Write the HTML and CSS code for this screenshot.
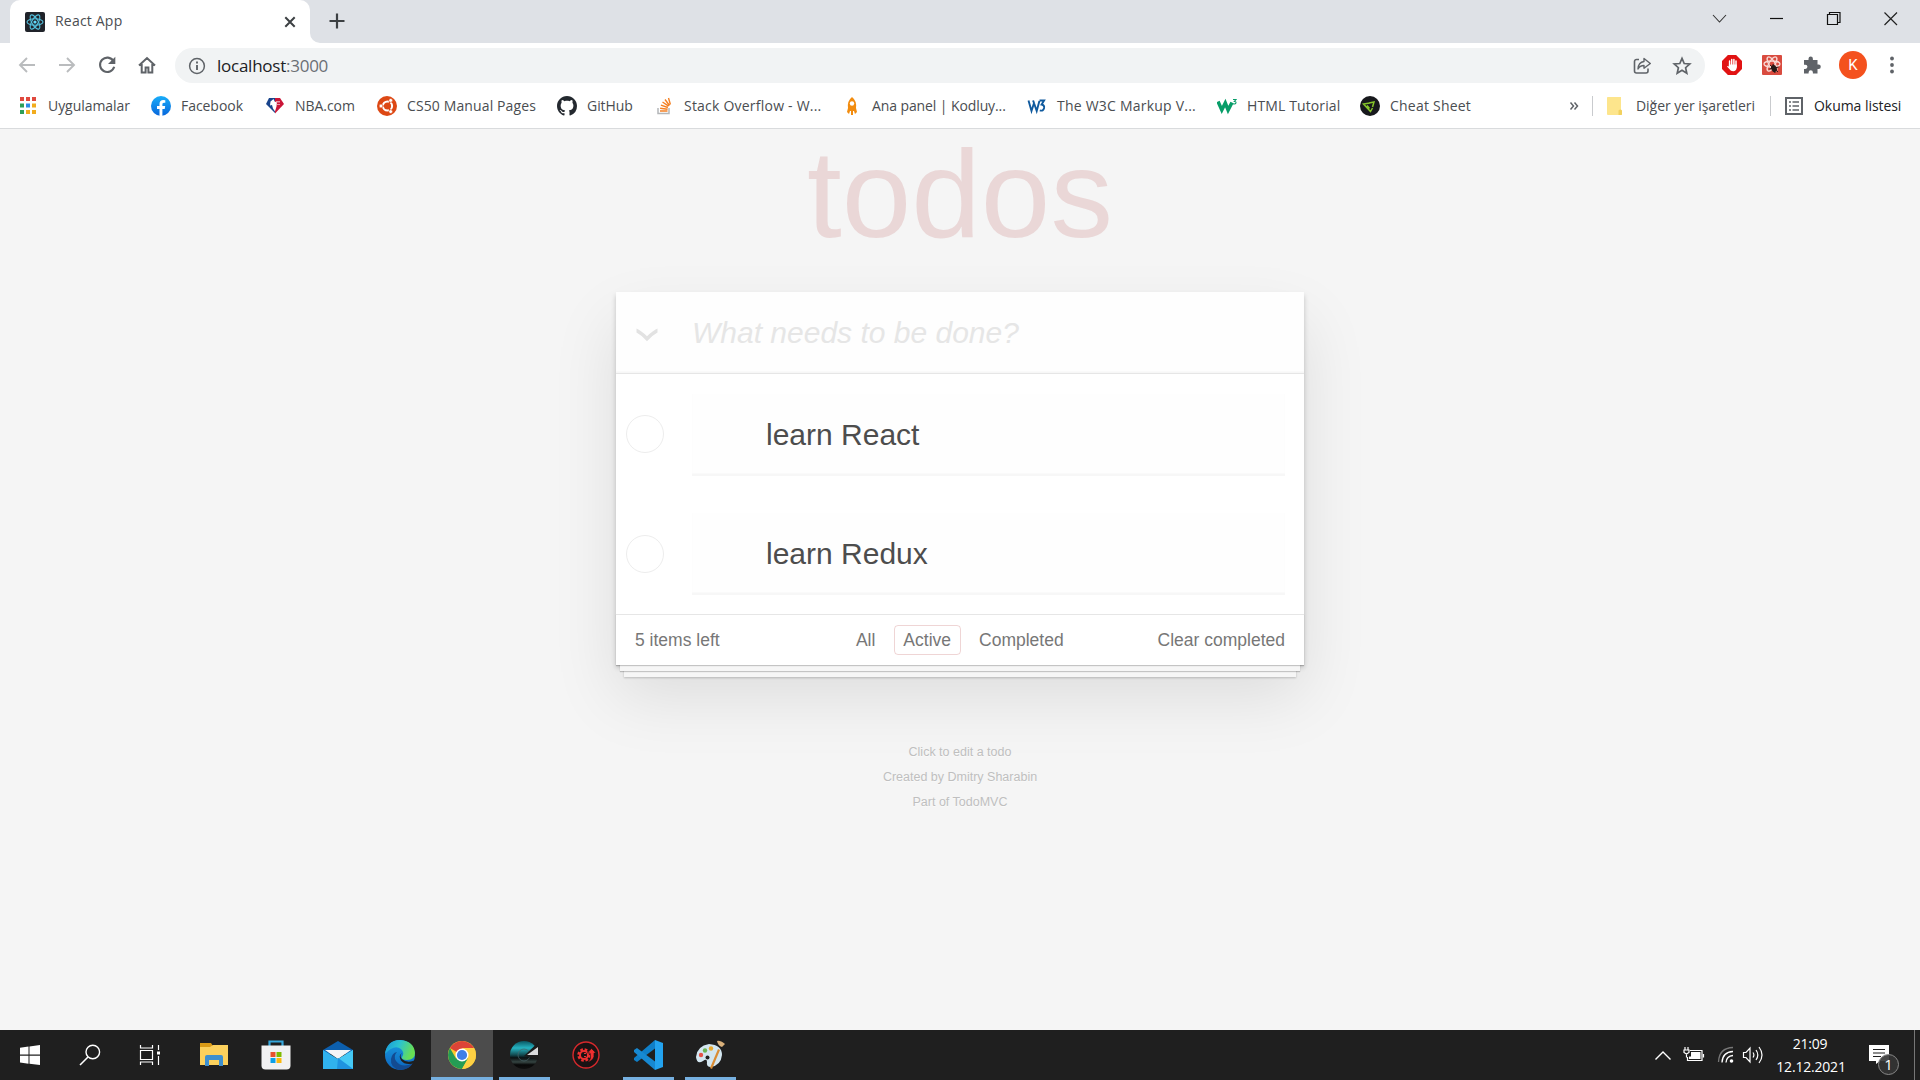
FILE: index.html
```html
<!DOCTYPE html>
<html lang="tr">
<head>
<meta charset="utf-8">
<title>React App</title>
<link rel="stylesheet" href="styles.css">
</head>
<body>
<div class="screen">
<header class="browser">
  <div class="tabstrip">
    <div class="tab">
      <svg class="tab-icon" width="20" height="20" viewBox="0 0 20 20"><rect width="20" height="20" rx="2" fill="#20232a"/><g fill="none" stroke="#53c1de" stroke-width="1.1"><ellipse cx="10" cy="10" rx="8" ry="3.2"/><ellipse cx="10" cy="10" rx="8" ry="3.2" transform="rotate(60 10 10)"/><ellipse cx="10" cy="10" rx="8" ry="3.2" transform="rotate(120 10 10)"/></g><circle cx="10" cy="10" r="1.6" fill="#61dafb"/></svg>
      <span class="tab-title">React App</span>
      <svg class="tab-close" width="12" height="12" viewBox="0 0 12 12"><path d="M1.3 1.3l9.4 9.4M10.7 1.3l-9.4 9.4" stroke="#3c4043" stroke-width="2"/></svg>
    </div>
    <svg class="tab-foot" width="10" height="10" viewBox="0 0 10 10"><path d="M0 0a10 10 0 0 0 10 10H0z" fill="#fff"/></svg>
    <svg class="new-tab" width="16" height="16" viewBox="0 0 16 16"><path d="M8 .5v15M.5 8h15" stroke="#3c4043" stroke-width="2.2"/></svg>
    <div class="window-buttons">
      <svg width="58" height="38" viewBox="0 0 58 38"><path d="M23 15l6.500 7 6.500-7" fill="none" stroke="#333" stroke-width="1.1"/></svg>
      <svg width="57" height="38" viewBox="0 0 57 38"><path d="M22 18.500h13" stroke="#111" stroke-width="1.2"/></svg>
      <svg width="57" height="38" viewBox="0 0 57 38"><path d="M22.500 14.500h10v10h-10zM24.500 14.500v-2h10.500v10h-2.500" fill="none" stroke="#111" stroke-width="1.2"/></svg>
      <svg width="58" height="38" viewBox="0 0 58 38"><path d="M22.500 12.500l12.500 12.500M35 12.500L22.500 25" stroke="#222" stroke-width="1.2"/></svg>
    </div>
  </div>
  <div class="toolbar">
    <div class="nav-buttons">
      <svg width="20" height="20" viewBox="0 0 20 20"><path d="M18 10H3M10 3l-7 7 7 7" fill="none" stroke="#babcbe" stroke-width="1.9"/></svg>
      <svg width="20" height="20" viewBox="0 0 20 20"><path d="M2 10h15M10 3l7 7-7 7" fill="none" stroke="#babcbe" stroke-width="1.9"/></svg>
      <svg width="20" height="20" viewBox="0 0 20 20"><path d="M16.400 6A7.200 7.200 0 1 0 17.200 11.800" fill="none" stroke="#5f6368" stroke-width="2.100"/><path d="M18.300 1.700v7.300H11z" fill="#5f6368"/></svg>
      <svg width="20" height="20" viewBox="0 0 20 20"><path d="M2 10.500L10 3l8 7.500M4.700 9v8.400h3.900v-5h2.800v5h3.900V9" fill="none" stroke="#5f6368" stroke-width="2"/></svg>
    </div>
    <div class="address">
      <svg width="18" height="18" viewBox="0 0 18 18"><circle cx="9" cy="9" r="7.400" fill="none" stroke="#5f6368" stroke-width="1.500"/><path d="M9 8v5M9 4.600v2" stroke="#5f6368" stroke-width="1.900"/></svg>
      <span class="url">localhost<span class="port">:3000</span></span>
      <svg class="share" width="20" height="20" viewBox="0 0 20 20"><path d="M7 3.500H4.500a2 2 0 0 0-2 2V15a2 2 0 0 0 2 2h9.500a2 2 0 0 0 2-2v-2.500" fill="none" stroke="#5f6368" stroke-width="1.600"/><path d="M12 2.500l6.300 5-6.300 4.700V9.500c-3 0-4.700 1-6 3.500.2-4 2.300-7 6-7.500z" fill="none" stroke="#5f6368" stroke-width="1.400" stroke-linejoin="round"/></svg>
      <svg width="20" height="20" viewBox="0 0 20 20"><path d="M10 2.400l2.200 5.100 5.600.5-4.200 3.700 1.200 5.500-4.800-2.900-4.800 2.900 1.200-5.500L2.200 8l5.600-.5z" fill="none" stroke="#5f6368" stroke-width="1.700"/></svg>
    </div>
    <div class="extensions">
      <svg width="20" height="20" viewBox="0 0 20 20"><path d="M5.900 0h8.200L20 5.900v8.200L14.100 20H5.900L0 14.100V5.900z" fill="#e11313"/><path d="M7.600 6v5M9.700 4.400V10M11.900 4.400V10M14 6v6" stroke="#fff" stroke-width="1.500" stroke-linecap="round"/><path d="M6.900 9.500h7.850v3q-.4 3.800-3.600 3.800-2.500 0-3.800-2.300L5 11.500q.6-1.200 1.900 0z" fill="#fff"/></svg>
      <svg width="20" height="20" viewBox="0 0 20 20"><rect width="20" height="20" rx="1" fill="#d94b3f"/><g fill="none" stroke="#f8d8d4" stroke-width="1.300"><ellipse cx="10" cy="9" rx="8" ry="3"/><ellipse cx="10" cy="9" rx="8" ry="3" transform="rotate(60 10 9)"/><ellipse cx="10" cy="9" rx="8" ry="3" transform="rotate(120 10 9)"/></g><ellipse cx="12" cy="13.500" rx="2.700" ry="3.700" transform="rotate(-25 12 13.500)" fill="#241816"/><path d="M8 10l8 7M7.500 14l9-2M11 9l2 9" stroke="#241816"/></svg>
      <svg width="20" height="20" viewBox="0 0 20 20"><path d="M2 5h4.500V3.700a2.200 2.200 0 0 1 4.400 0V5h4.600v4.600h1.100a2.200 2.200 0 0 1 0 4.400h-1.100v4.500h-4.600v-1.100a2 2 0 0 0-4.300 0v1.100H2v-4.500h1.300a2.100 2.100 0 0 0 0-4.300H2z" fill="#5f6368"/></svg>
      <span class="avatar">K</span>
      <svg class="menu" width="6" height="18" viewBox="0 0 6 18"><g fill="#5f6368"><circle cx="3" cy="2.500" r="1.900"/><circle cx="3" cy="9" r="1.900"/><circle cx="3" cy="15.500" r="1.900"/></g></svg>
    </div>
  </div>
  <nav class="bookmarks">
    <div class="bookmark"><svg width="20" height="20" viewBox="0 0 20 20"><path d="M2 1h4v4H2zM8 1h4v4H8zM14 1h4v4h-4z" fill="#e0493e"/><path d="M2 7.500h4v4H2zM2 14h4v4H2z" fill="#2e9e58"/><path d="M8 7.500h4v4H8z" fill="#2f8be6"/><path d="M14 7.500h4v4h-4zM8 14h4v4H8zM14 14h4v4h-4z" fill="#f2ac1d"/></svg><span>Uygulamalar</span></div>
    <div class="bookmark"><svg width="20" height="20" viewBox="0 0 20 20"><defs><linearGradient id="fb" x2="0" y2="1"><stop stop-color="#19adf9"/><stop offset="1" stop-color="#0866db"/></linearGradient></defs><circle cx="10" cy="10" r="10" fill="url(#fb)"/><path d="M8.500 20v-7H6v-2.900h2.500V8c0-2.500 1.500-3.900 3.700-3.900l2.100.2v2.400H13c-1.200 0-1.600.8-1.600 1.500v1.900h2.800l-.5 2.900h-2.300v7z" fill="#fff"/></svg><span>Facebook</span></div>
    <div class="bookmark"><svg width="20" height="20" viewBox="0 0 20 20"><path d="M4 2h6v15L1 8z" fill="#19448c"/><path d="M10 2h5l4 6-9 9.500z" fill="#ca1537"/><path d="M5.500 5.500l3-2.500 1.500 3 2-.5-.5 5-1.500 5-2-3-1-3.500-2 .5z" fill="#fff"/><path d="M11 5h4v1.500h-4zM12 8h3v1h-3z" fill="#e994a3"/></svg><span>NBA.com</span></div>
    <div class="bookmark"><svg width="20" height="20" viewBox="0 0 20 20"><circle cx="10" cy="10" r="10" fill="#dd4814"/><circle cx="10.500" cy="10" r="4.600" fill="none" stroke="#fff" stroke-width="2"/><path d="M10.500 10L3 10M10.500 10l4-7M10.500 10l4 7" stroke="#dd4814" stroke-width="1.200"/><g fill="#fff" stroke="#dd4814" stroke-width=".6"><circle cx="4" cy="10" r="1.900"/><circle cx="13.700" cy="4.400" r="1.900"/><circle cx="13.700" cy="15.600" r="1.900"/></g></svg><span class="wide">CS50 Manual Pages</span></div>
    <div class="bookmark"><svg width="20" height="20" viewBox="0 0 16 16"><path fill="#24292f" fill-rule="evenodd" d="M8 0C3.580 0 0 3.580 0 8c0 3.540 2.290 6.530 5.470 7.590.4.070.55-.17.55-.38 0-.19-.010-.82-.010-1.490-2.010.37-2.530-.49-2.690-.94-.090-.23-.48-.94-.82-1.130-.28-.15-.68-.52-.010-.53.63-.010 1.080.58 1.230.82.72 1.210 1.870.87 2.330.66.070-.52.28-.87.510-1.070-1.780-.2-3.640-.89-3.640-3.950 0-.87.310-1.590.82-2.150-.080-.2-.36-1.020.080-2.120 0 0 .67-.21 2.200.82.64-.18 1.320-.27 2-.27s1.360.090 2 .27c1.530-1.040 2.200-.82 2.200-.82.44 1.100.16 1.920.080 2.120.51.56.82 1.270.82 2.150 0 3.070-1.870 3.750-3.650 3.950.29.25.54.73.54 1.480 0 1.070-.010 1.930-.010 2.200 0 .21.15.46.55.38A8 8 0 0 0 16 8c0-4.420-3.580-8-8-8z"/></svg><span>GitHub</span></div>
    <div class="bookmark"><svg width="20" height="20" viewBox="0 0 20 20"><path d="M4 12v5.500h11V12" fill="none" stroke="#b4b6b9" stroke-width="1.500"/><path d="M6 15h7.500M6.100 12.200l7.500 1M6.900 9.200l7 2.300M8.500 6l6.100 4.200M11 3.500l4.500 6M14.500 2l1.900 6.500" stroke="#f48024" stroke-width="1.400"/></svg><span class="wider">Stack Overflow - W...</span></div>
    <div class="bookmark"><svg width="20" height="20" viewBox="0 0 20 20"><path d="M10 1q5 4 4 11l1 4-2 2-1-3H8l-1 3-2-2 1-4Q5 5 10 1z" fill="#f28c0f"/><circle cx="10" cy="7.500" r="2.200" fill="#fff"/><path d="M10 15v4" stroke="#f28c0f" stroke-width="2"/></svg><span class="even">Ana panel | Kodluy...</span></div>
    <div class="bookmark"><svg width="20" height="20" viewBox="0 0 20 20"><path d="M1.500 4.500l3 10.500 2.500-8 2.700 8 2.700-10M6 4.500l1.200 3M12.500 4.500h4.600l-2.500 4q3 .5 2.500 3.500-.8 3.500-4.300 2.400" fill="none" stroke="#105a9e" stroke-width="1.900"/></svg><span class="wider">The W3C Markup V...</span></div>
    <div class="bookmark"><svg width="20" height="20" viewBox="0 0 20 20"><path d="M1 5.500l3.800 8.500L8.300 7l2.800 7L15 6.500" fill="none" stroke="#079d68" stroke-width="3.500"/><path d="M16 3.500h3l-1.700 2q2 .1 1.600 1.500-.6 1.400-2.900.7" fill="none" stroke="#079d68" stroke-width="1.100"/></svg><span class="wide">HTML Tutorial</span></div>
    <div class="bookmark"><svg width="20" height="20" viewBox="0 0 20 20"><circle cx="10" cy="10" r="10" fill="#17181c"/><path d="M10 7L3.500 8l7 7.500 2-3.500M7 9.500l2.500 3M9 7l5-1-1.500 5" fill="none" stroke="#86c52b" stroke-width="1.500"/></svg><span class="wider">Cheat Sheet</span></div>
    <div class="bookmark-tail">
      <svg class="more" width="10" height="10" viewBox="0 0 10 10"><path d="M1.500 1.500L4.500 5l-3 3.500M5.500 1.500l3 3.500-3 3.500" fill="none" stroke="#5f6368" stroke-width="1.500"/></svg>
      <i class="divider"></i>
      <svg class="folder" width="18" height="20" viewBox="0 0 18 20"><path d="M1 1.500Q1 1 2 1h13v14l1 4H2q-1 0-1-1z" fill="#fde58c"/><path d="M12.500 19v-4.500q2-2 3.500 0V18q0 1-1 1z" fill="#f2d15e"/></svg>
      <span class="other">Diğer yer işaretleri</span>
      <i class="divider"></i>
      <svg class="list" width="18" height="18" viewBox="0 0 18 18"><rect x="1" y="1" width="16" height="16" fill="none" stroke="#5f6368" stroke-width="2"/><path d="M4 5h2M4 9h2M4 13h2M7.500 5H14M7.500 9H14M7.500 13H14" stroke="#5f6368" stroke-width="1.600"/></svg>
      <span class="reading">Okuma listesi</span>
    </div>
  </nav>
</header>

<main class="page">
  <h1>todos</h1>
  <section class="todoapp">
    <div class="new-todo">
      <svg width="22" height="14" viewBox="0 0 22 14"><path d="M.5.500Q5 2.500 11 8.200 17 2.500 21.500.500V4.500Q16 7.500 11 13.200 6 7.500 .5 4.500z" fill="#e2e2e2"/></svg>
      <span>What needs to be done?</span>
    </div>
    <ul class="todo-list">
      <li><i class="toggle"></i><div class="todo">learn React</div></li>
      <li><i class="toggle"></i><div class="todo">learn Redux</div></li>
    </ul>
    <footer class="todo-footer">
      <span class="count">5 items left</span>
      <div class="filters"><a>All</a><a class="selected">Active</a><a>Completed</a></div>
      <span>Clear completed</span>
    </footer>
  </section>
  <div class="info"><p>Click to edit a todo</p><p>Created by Dmitry Sharabin</p><p>Part of TodoMVC</p></div>
</main>

<div class="taskbar">
  <div class="system">
    <svg width="22" height="22" viewBox="0 0 22 22"><path d="M1 3.800L9.500 2.600v8H1zM10.500 2.400L21 1v9.600H10.500zM1 11.700h8.500v8L1 18.500zM10.500 11.700H21V21l-10.500-1.300z" fill="#fff"/></svg>
    <svg width="22" height="22" viewBox="0 0 22 22"><circle cx="13.800" cy="8" r="6.800" fill="none" stroke="#fff" stroke-width="1.400"/><path d="M9 13l-8 8" stroke="#fff" stroke-width="1.600"/></svg>
    <svg width="22" height="22" viewBox="0 0 22 22"><path d="M1.500 1v3h12V1M1.500 21v-3h12v3M1.500 6.500h12v9h-12zM19.500 1v5M19.500 12v9" fill="none" stroke="#fff" stroke-width="1.200"/><path d="M18 7.500h3v3h-3z" fill="#fff"/></svg>
  </div>
  <div class="apps">
    <div class="app"><svg width="30" height="30" viewBox="0 0 30 30"><path d="M1 3h11l2 3-3 2H1z" fill="#d99a16"/><path d="M1 7h10l3-2h15v20H1z" fill="#fbd05c"/><path d="M6 26V17q0-2 2-2h14q2 0 2 2v9h-4v-6h-10v6z" fill="#3d8fcf"/></svg></div>
    <div class="app"><svg width="30" height="30" viewBox="0 0 30 30"><path d="M8.500 7V1.500h13V7" fill="none" stroke="#36a7dc" stroke-width="2.200"/><path d="M.5 5.500h29v20q0 4-4 4h-21q-4 0-4-4z" fill="#f1f1f2"/><path d="M9.500 12H14.500v5h-5z" fill="#e8502e"/><path d="M15.500 12h5v5h-5z" fill="#7fba00"/><path d="M9.500 18h5v5h-5z" fill="#0b9fe8"/><path d="M15.500 18h5v5h-5z" fill="#fbb80c"/></svg></div>
    <div class="app"><svg width="30" height="30" viewBox="0 0 30 30"><path d="M0 10L15 1l15 9v4H0z" fill="#0c5fae"/><path d="M2 10h26L15 19z" fill="#f3f5f7"/><path d="M0 10l14 8.500h2L30 10v19H0z" fill="#30b2ee"/><path d="M16 18.500L30 10v19z" fill="#45c9f5"/><path d="M15 18l15 11H14z" fill="#1f93e0"/></svg></div>
    <div class="app"><svg width="30" height="30" viewBox="0 0 30 30"><defs><linearGradient id="e1" x2="1" y2="0.300"><stop stop-color="#1795dc"/><stop offset=".5" stop-color="#2bc3cf"/><stop offset="1" stop-color="#68df53"/></linearGradient><linearGradient id="e2" x2="0" y2="1"><stop stop-color="#1b9de2"/><stop offset="1" stop-color="#0c64bd"/></linearGradient></defs><circle cx="15" cy="15" r="15" fill="url(#e2)"/><path d="M0 14Q2 0 15 0q14 1 15 13 0 7-8 7-6 0-5-3 3-4-1-8Q9 4 0 14z" fill="url(#e1)"/><path d="M12 12q-4 4-1 9 6 8 17 2-4 7-13 7-10-2-9-11 1-6 6-7z" fill="#134b91"/><path d="M17 13q-3 3 0 6 4 4 11 2l2-1v3l-2 .500q-8 2-12-3-3-5 1-7.500z" fill="#1f1f1f"/></svg></div>
    <div class="app active running"><svg width="28" height="28" viewBox="0 0 28 28"><circle cx="14" cy="14" r="14" fill="#fbc92e"/><path d="M14 14L1.900 7A14 14 0 0 1 26.100 7z" fill="#dd4437"/><path d="M1.900 7A14 14 0 0 0 14 28l6-10.500-12-0z" fill="#249c54"/><path d="M14 28a14 14 0 0 0 12.100-21H14l6 10.500z" fill="#fdd043"/><circle cx="14" cy="14" r="6.500" fill="#fff"/><circle cx="14" cy="14" r="5.100" fill="#3f7fe8"/></svg></div>
    <div class="app running"><svg width="30" height="30" viewBox="0 0 30 30"><defs><linearGradient id="g1" x2="0" y2="1"><stop stop-color="#0a5561"/><stop offset=".25" stop-color="#26b4c2"/><stop offset=".5" stop-color="#124a50"/><stop offset=".6" stop-color="#0a1011"/><stop offset=".75" stop-color="#354442"/><stop offset=".85" stop-color="#080808"/><stop offset="1" stop-color="#101010"/></linearGradient></defs><circle cx="15" cy="15" r="14" fill="url(#g1)"/><circle cx="15" cy="15" r="6" fill="none" stroke="#49656a" stroke-opacity=".7"/><path d="M15 16L29.500 2v18z" fill="#1b1b1b"/><path d="M18 15L29 7v8z" fill="#d9dadb"/></svg></div>
    <div class="app"><svg width="28" height="28" viewBox="0 0 28 28"><circle cx="14" cy="14" r="13" fill="#191314" stroke="#d6292c" stroke-width="1.400"/><circle cx="12" cy="14" r="5.500" fill="none" stroke="#ef3030" stroke-width="2.500" stroke-dasharray="2.600 1.720"/><circle cx="12" cy="14" r="4" fill="none" stroke="#ef3030" stroke-width="2"/><path d="M12 12.500h2M12 15.500h2" stroke="#ef3030"/><path d="M15 21q5-2 3-9h-2.500l4-4.500 4.500 4.500h-2q1 8-7 9z" fill="#ef3030" stroke="#191314" stroke-width=".6"/></svg></div>
    <div class="app running"><svg width="30" height="30" viewBox="0 0 30 30"><path d="M22 0l8 3v24l-8 3z" fill="#23a3ef"/><path d="M22 0v8.500L4 22l-3-2v-2z" fill="#0f7fc8"/><path d="M22 30v-8.500L4 8l-3 2v2z" fill="#1789d2"/></svg></div>
    <div class="app running"><svg width="30" height="30" viewBox="0 0 30 30"><path d="M1 17Q2 6 14 4q13 1 13 11-1 10-11 12-5 0-4-5 0-4-4-1-6 4-7-4z" fill="#d3e6f0"/><circle cx="6" cy="15" r="2.200" fill="#e45248"/><circle cx="10" cy="10.500" r="2.200" fill="#6cb454"/><circle cx="16" cy="8.500" r="2.200" fill="#e8a82d"/><circle cx="12.500" cy="17.500" r="2" fill="#222"/><path d="M15 28l8-19 2 1-8 19z" fill="#d98c34"/><path d="M22 1q3-1 8 3l-3 3q-4-1-5-6z" fill="#d9b07b"/></svg></div>
  </div>
  <div class="tray">
    <svg class="up" width="18" height="12" viewBox="0 0 18 12"><path d="M1.500 10.500L9 3l7.500 7.500" fill="none" stroke="#fff" stroke-width="1.400"/></svg>
    <svg class="battery" width="22" height="16" viewBox="0 0 22 16"><path d="M7 3.500h12v10H4.500V10M20.500 7v3.500" fill="none" stroke="#fff" stroke-width="1.200"/><path d="M8 5h9.500v7H6V9.500h2z" fill="#fff"/><path d="M2 0v3M5 0v3M1 3h5v2.500L3.500 7 1 5.500zM3.500 7v3.500" fill="none" stroke="#fff" stroke-width="1.200"/></svg>
    <svg class="wifi" width="18" height="18" viewBox="0 0 18 18"><g fill="none" stroke="#777" stroke-width="1.300"><path d="M1.500 16Q2 2 16 1.500" /></g><path d="M5 16.500Q5.500 6 16 5.500M9 16.500Q9.500 10 16 9.500" fill="none" stroke="#fff" stroke-width="1.300"/><circle cx="14.500" cy="15" r="1.800" fill="#fff"/></svg>
    <svg class="speaker" width="22" height="20" viewBox="0 0 22 20"><path d="M1.500 7.500H4l4-4.500v14l-4-4.500H1.500z" fill="none" stroke="#fff" stroke-width="1.200"/><path d="M11 7.500q1.800 2.500 0 5M14 5q3.600 5 0 10M17 2q6 8 0 16" fill="none" stroke="#fff" stroke-width="1.200"/></svg>
    <div class="clock"><span class="time">21:09</span><span class="date">12.12.2021</span></div>
    <div class="notice"><svg width="20" height="20" viewBox="0 0 20 20"><path d="M0 0h20v16h-9l-4 3v-3H0z" fill="#fff"/><path d="M4 4.500h12M4 8h12M4 11.500h8" stroke="#1f1f1f" stroke-width="1.200"/></svg><span class="badge">1</span></div>
    <i class="desktop-edge"></i>
  </div>
</div>
</div>
</body>
</html>
```
FILE: styles.css
```css
* { box-sizing: border-box; }
body { margin: 0; background: #f5f5f5; overflow: hidden; }
svg { display: block; flex: none; }
.screen { width: 1920px; height: 1080px; display: flex; flex-direction: column; }

/* Browser frame */
.browser { height: 129px; background: #fff; border-bottom: 1px solid #d9dbdd; font-family: "Open Sans", "Noto Sans", sans-serif; color: #4a4d51; flex: none; }
.tabstrip { height: 43px; background: #dee1e6; display: flex; padding-left: 10px; }
.tab { width: 300px; background: #fff; border-radius: 10px 10px 0 0; display: flex; align-items: center; padding: 0 14px 0 15px; }
.tab-title { margin-left: 10px; font-size: 14px; letter-spacing: .2px; flex: 1; padding-bottom: 3px; }
.tab-foot { align-self: flex-end; }
.new-tab { margin: 13px 0 0 9px; }
.window-buttons { display: flex; margin-left: auto; }
.toolbar { height: 45px; display: flex; align-items: center; padding: 0 23px 0 17px; }
.nav-buttons { display: flex; gap: 20px; width: 158px; }
.nav-buttons svg, .extensions svg, .extensions .avatar { margin-bottom: 1px; }
.address { width: 1530px; height: 35px; border-radius: 18px; background: #f1f3f4; display: flex; align-items: center; padding: 0 13px 0 13px; gap: 20px; }
.url { margin-left: -9px; font-size: 17px; letter-spacing: -.25px; color: #202124; padding-bottom: 1px; }
.port { color: #6b6f74; }
.share { margin-left: auto; }
.extensions { display: flex; align-items: center; margin-left: 17px; gap: 20px; }
.avatar { width: 28px; height: 28px; border-radius: 50%; background: #f4511e; color: #fff; display: flex; justify-content: center; align-items: center; font: 15px Roboto, sans-serif; margin-left: -3px; }
.menu { margin-left: 2px; }
.bookmarks { height: 36px; display: grid; grid-template-columns: 133px 114px 112px 180px 97px 188px 185px 190px 143px 140px 1fr; align-items: center; padding-left: 18px; font-size: 14px; letter-spacing: -.05px; }
.bookmark { display: flex; align-items: center; gap: 10px; white-space: nowrap; }
.bookmark span { padding-bottom: 1px; }
.bookmark .wide { letter-spacing: .12px; }
.bookmark .wider { letter-spacing: .22px; }
.bookmark .even { letter-spacing: -.1px; }
.bookmark-tail { display: flex; align-items: center; white-space: nowrap; padding-left: 69px; }
.bookmark-tail span { padding-bottom: 1px; }
.bookmark-tail .divider { width: 1px; height: 20px; background: #c9cbce; }
.more { margin-right: 13px; }
.folder { margin: 0 12px 0 13px; }
.other { width: 134px; }
.list { margin: 0 11px 0 14px; }
.reading { color: #202124; }

/* Todo page */
.page { flex: 1; display: flex; flex-direction: column; align-items: center; font-family: "Liberation Sans", Arial, sans-serif; color: #4d4d4d; }
h1 { margin: -5px 0 0; font-size: 125px; line-height: 140px; height: 168px; font-weight: 400; color: rgba(175, 47, 47, .15); }
.todoapp { width: 688px; height: 373px; background: #fff; box-shadow: 0 2.5px 5px rgba(0,0,0,.2), 0 31px 62px rgba(0,0,0,.1); display: flex; flex-direction: column; }
.new-todo { height: 82px; display: flex; align-items: center; padding-left: 20px; gap: 34px; background: rgba(0,0,0,.003); box-shadow: inset 0 -2.5px 1.250px rgba(0,0,0,.03); font-size: 30px; font-style: italic; color: #e6e6e6; }
.new-todo svg { position: relative; top: 2px; }
.todo-list { list-style: none; margin: 0; padding: 19px 19px 0 10px; border-top: 1px solid #e6e6e6; height: 240px; }
.todo-list li { display: flex; height: 119px; align-items: flex-start; }
.toggle { width: 38px; height: 38px; margin: 21px 28px 0 0; border: 1px solid #ededed; border-radius: 50%; }
li + li .toggle { margin-top: 22px; }
.todo { flex: 1; height: 82px; padding: 1px 0 0 74px; font-size: 30px; line-height: 80px; background: rgba(0,0,0,.003); box-shadow: inset 0 -2.5px 1.250px rgba(0,0,0,.03); }
.todo-footer { height: 51px; border-top: 1px solid #e6e6e6; padding: 0 19px; display: flex; justify-content: space-between; align-items: center; font-size: 17.5px; color: #777; box-shadow: 0 1px 1px rgba(0,0,0,.2), 0 10px 0 -4px #f6f6f6, 0 11px 1px -4px rgba(0,0,0,.2), 0 20px 0 -8px #f6f6f6, 0 21px 2px -8px rgba(0,0,0,.2); }
.filters { display: flex; gap: 9px; margin-left: 42px; }
.filters a { height: 30px; line-height: 28px; padding: 0 8.5px; border: 1px solid transparent; border-radius: 4px; }
.filters .selected { border-color: rgba(175, 47, 47, .2); }
.count { width: 85px; white-space: nowrap; }
.info { margin-top: 80px; font-size: 12.5px; text-align: center; color: #bfbfbf; text-shadow: 0 1px 0 rgba(255,255,255,.5); }
.info p { margin: 0; line-height: 15px; height: 25px; }
.new-todo { margin-bottom: -1px; }
.todo-list { padding-top: 20px; height: 241px; }

/* Windows taskbar */
.taskbar { height: 50px; background: #1f1f1f; display: flex; flex: none; color: #fff; font-family: "Open Sans", "Noto Sans", sans-serif; }
.system { width: 183px; display: flex; align-items: center; gap: 38px; padding-left: 19px; }
.apps { display: flex; }
.app { width: 62px; display: flex; justify-content: center; align-items: center; background: linear-gradient(#76b0e0, #76b0e0) center bottom / 0 3px no-repeat; }
.running { background-size: 51px 3px; }
.active { background-color: #4c4c4c; background-size: 62px 3px; }
.tray { margin-left: auto; display: flex; align-items: center; }
.up { margin-right: 11px; }
.battery { margin-right: 12px; }
.wifi { margin-right: 7px; }
.speaker { margin-right: 8px; }
.clock { width: 78px; display: flex; flex-direction: column; align-items: center; font-size: 14px; line-height: 23px; letter-spacing: -.2px; }
.time { margin-right: 2px; }
.notice { position: relative; margin-left: 19px; width: 45px; }
.badge { position: absolute; left: 9px; top: 9px; width: 21px; height: 21px; border: 1px solid #888; border-radius: 50%; background: rgba(52,52,52,.9); font-size: 15px; line-height: 19px; text-align: center; }
.desktop-edge { align-self: stretch; width: 6px; border-left: 1px solid #777; }
```
